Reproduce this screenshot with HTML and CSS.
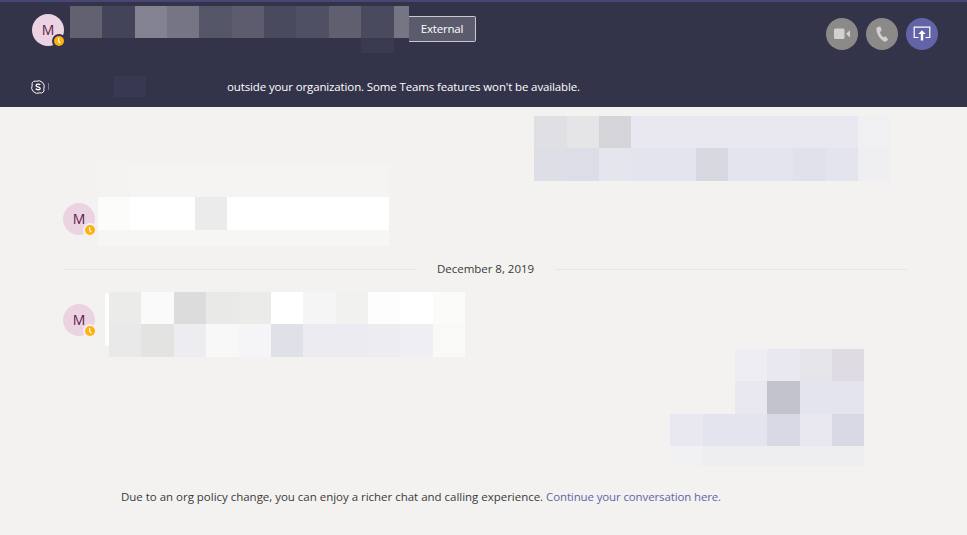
FILE: index.html
```html
<!DOCTYPE html>
<html lang="en">
<head>
<meta charset="utf-8">
<title>Chat</title>
<link rel="stylesheet" href="styles.css">
</head>
<body>
<svg class="defs" width="0" height="0" aria-hidden="true"><defs>
<g id="clock"><circle cx="6" cy="6" r="5" fill="#ffb10f"/><path d="M5.600 3v3.200l1.700 2" fill="none" stroke="#fff" stroke-width="1.200"/></g>
</defs></svg>
<header class="header">
  <div class="top">
    <div class="avatar">M<svg class="status status-dark" viewBox="0 0 12 12"><use href="#clock"/></svg></div>
    <div class="mosaic name">
      <i class="n1"></i><i class="n2"></i><i class="n3"></i><i class="n4"></i><i class="n5"></i><i class="n6"></i><i class="n7"></i><i class="n8"></i><i class="n9"></i><i class="n7"></i><i class="n4"></i>
      <i class="blank span9"></i><i class="n0"></i>
    </div>
    <div class="external">External</div>
    <div class="actions">
      <button class="round grey" aria-label="Video call"><svg viewBox="0 0 16 16" width="16" height="16"><rect x="0" y="2.500" width="10.500" height="10.500" rx="1.500" fill="#d2d0ce"/><path d="M12 7.700 16 4.200v7.400z" fill="#d2d0ce"/></svg></button>
      <button class="round grey" aria-label="Audio call"><svg viewBox="0 0 16 16" width="16" height="16"><path d="M3.400 1.200 5.600.6c.5-.1.900.1 1.100.6l.9 2.600c.1.400 0 .8-.3 1L6 5.900c.3 2 1.700 4.100 3.600 5.300l1.500-.6c.4-.1.800 0 1.100.3l1.600 2.100c.3.400.2.900-.2 1.200l-1.500 1.100c-.6.400-1.300.5-2 .1C5.800 13 2.600 8.200 2.400 2.700c0-.7.400-1.300 1-1.500z" fill="#d2d0ce"/></svg></button>
      <button class="round purple" aria-label="Share screen"><svg viewBox="0 0 18 18" width="18" height="18"><path d="M5.500 12.500H1.200V2.200h15.600v10.300h-4.300" fill="none" stroke="#fff" stroke-width="1.200"/><path d="M9 5.200l3.700 3.900h-2.500v6.500H7.800V9.100H5.300z" fill="#fff"/></svg></button>
    </div>
  </div>
  <div class="banner">
    <svg class="skype" viewBox="0 0 14 14" width="14" height="14"><path d="M4 1.100a3 3 0 0 0-2.800 4 5.800 5.800 0 0 0 7.700 7.700 3 3 0 0 0 3.900-3.900A5.800 5.800 0 0 0 5.100 1.300 3 3 0 0 0 4 1.100z" fill="none" stroke="#fff" stroke-width="1"/><path d="M9.200 5c-.5-.9-3.800-1.400-4.200.3-.4 2 4.400 1.200 4.200 3.300-.2 1.600-3.700 1.400-4.500.1" fill="none" stroke="#fff" stroke-width="1.300"/></svg>
    <span class="bar"></span>
    <span class="faint"></span>
    <span class="notice">outside your organization. Some Teams features won't be available.</span>
  </div>
</header>
<main class="chat">
  <div class="mosaic m1">
    <i class="a1"></i><i class="a2"></i><i class="a3"></i><i class="a4"></i><i class="a4"></i><i class="a4"></i><i class="a4"></i><i class="a4"></i><i class="a4"></i><i class="a4"></i><i class="a5"></i>
    <i class="b1"></i><i class="b2"></i><i class="b7"></i><i class="b3"></i><i class="b3"></i><i class="b4"></i><i class="b3"></i><i class="b3"></i><i class="b5"></i><i class="b3"></i><i class="b6"></i>
  </div>
  <div class="message m2-row">
    <div class="avatar avatar-low">M<svg class="status" viewBox="0 0 12 12"><use href="#clock"/></svg></div>
    <div class="mosaic m2">
      <i class="c1"></i><i class="c2"></i><i class="c2"></i><i class="c2"></i><i class="c2"></i>
      <i class="c3"></i><i class="c4"></i><i class="c5"></i><i class="c4"></i><i class="c4"></i>
      <i class="c6"></i><i class="c6"></i><i class="c6"></i><i class="c6"></i><i class="c6"></i>
    </div>
  </div>
  <div class="divider"><span class="date">December 8, 2019</span></div>
  <div class="message m3-row">
    <div class="avatar">M<svg class="status" viewBox="0 0 12 12"><use href="#clock"/></svg></div>
    <div class="bubble-edge"></div>
    <div class="mosaic m3">
      <i class="d1"></i><i class="d2"></i><i class="d3"></i><i class="d4"></i><i class="d1"></i><i class="c4"></i><i class="d5"></i><i class="d6"></i><i class="d7"></i><i class="c4"></i><i class="d8"></i>
      <i class="e1"></i><i class="e2"></i><i class="e3"></i><i class="e4"></i><i class="e5"></i><i class="e6"></i><i class="e7"></i><i class="e7"></i><i class="e3"></i><i class="e8"></i><i class="e9"></i>
    </div>
  </div>
  <div class="mosaic m4">
    <i class="blank"></i><i class="blank"></i><i class="f1"></i><i class="a4"></i><i class="f2"></i><i class="f3"></i>
    <i class="blank"></i><i class="blank"></i><i class="a4"></i><i class="f4"></i><i class="b3"></i><i class="b3"></i>
    <i class="a4"></i><i class="b3"></i><i class="b3"></i><i class="f5"></i><i class="a4"></i><i class="f5"></i>
    <i class="g1"></i><i class="g2"></i><i class="g2"></i><i class="g2"></i><i class="g2"></i><i class="g2"></i>
  </div>
  <p class="policy">Due to an org policy change, you can enjoy a richer chat and calling experience. <a href="#">Continue your conversation here.</a></p>
</main>
</body>
</html>
```
FILE: styles.css
```css
* { box-sizing: border-box; }
html, body { margin: 0; height: 100%; }
body {
  width: 967px;
  height: 535px;
  overflow: hidden;
  display: flex;
  flex-direction: column;
  font-family: "Open Sans", "Liberation Sans", sans-serif;
  font-size: 11.500px;
  background: #f3f2f1;
  color: #3b3a39;
}
.defs { position: absolute; }

.header {
  height: 107px;
  flex: none;
  background: #33344a;
  border-top: 2px solid #464775;
  color: #fff;
}
.top { display: flex; align-items: flex-start; padding-left: 32px; height: 62px; }
.avatar {
  position: relative;
  flex: none;
  width: 32px;
  height: 32px;
  border-radius: 50%;
  background: #ecd3e2;
  color: #5c2048;
  font-size: 14px;
  font-weight: 500;
  line-height: 32px;
  text-align: center;
}
.top > .avatar { margin-top: 12px; margin-right: 6px; }
.status {
  position: absolute;
  right: -2px;
  bottom: -2px;
  width: 14px;
  height: 14px;
  border-radius: 50%;
  background: #f3f2f1;
  padding: 1px;
}
.status-dark { background: #33344a; }

.mosaic { display: grid; flex: none; }
.mosaic i { display: block; }
.name {
  margin-top: 4px;
  grid-template-columns: 32px 33px 32px 32px 33px 32px 32px 33px 32px 33px 15px;
  grid-template-rows: 32px 15px;
}
.span9 { grid-column: span 9; }
.n0 { background: #393a50; }
.n1 { background: #62616f; }
.n2 { background: #43445a; }
.n3 { background: #838290; }
.n4 { background: #757583; }
.n5 { background: #555568; }
.n6 { background: #5c5c6e; }
.n7 { background: #4a4a5e; }
.n8 { background: #505064; }
.n9 { background: #605f70; }

.external {
  margin-top: 14px;
  width: 67px;
  height: 26px;
  background: #5b5b6e;
  border: 1px solid #c8c8d0;
  border-left: 0;
  border-radius: 0 2px 2px 0;
  font-weight: 500;
  letter-spacing: -0.2px;
  line-height: 24px;
  text-align: center;
}
.actions { display: flex; gap: 8px; margin: 16px 29px 0 auto; }
.round {
  width: 32px;
  height: 32px;
  padding: 0;
  border: 0;
  border-radius: 50%;
  display: flex;
  align-items: center;
  justify-content: center;
}
.grey { background: #8b8a89; }
.purple { background: #6264a7; }

.banner { display: flex; align-items: center; height: 21px; margin-top: 12px; padding-left: 31px; }
.skype { flex: none; }
.bar { width: 1px; height: 7px; margin-left: 3px; background: #77788a; }
.faint { width: 32px; height: 21px; margin-left: 65px; background: #383950; }
.notice {
  margin-left: 81px;
  white-space: nowrap;
  font-weight: 500;
  letter-spacing: -0.13px;
}

.chat { flex: 1; display: flex; flex-direction: column; min-height: 0; }
.m1 {
  align-self: flex-end;
  margin: 9px 77px 0 0;
  grid-template-columns: 33px 32px 32px 32px 33px 32px 32px 33px 33px 32px 32px;
  grid-template-rows: 32px 33px;
}
.a1 { background: #e0dfe3; }
.a2 { background: #e5e4e7; }
.a3 { background: #d5d4d8; }
.a4 { background: #e9e8f1; }
.a5 { background: #f0eff1; }
.b1 { background: #dedee7; }
.b2 { background: #dddde7; }
.b3 { background: #e4e4ef; }
.b4 { background: #d8d8e0; }
.b5 { background: #e1e1ec; }
.b6 { background: #efeef0; }
.b7 { background: #e5e5ed; }

.message { display: flex; padding-left: 63px; }
.m2-row { margin-top: -16px; align-items: flex-end; }
.avatar-low { margin-right: 3px; margin-bottom: 11px; }
.m2 {
  grid-template-columns: 32px 65px 32px 130px 32px;
  grid-template-rows: 32px 33px 16px;
}
.c1 { background: #f4f3f1; }
.c2 { background: #f5f4f2; }
.c3 { background: #fcfcfa; }
.c4 { background: #ffffff; }
.c5 { background: #ebebeb; }
.c6 { background: #f6f6f5; }

.divider {
  display: flex;
  align-items: center;
  gap: 21px;
  height: 20px;
  margin: 13px 60px 0 64px;
}
.divider::before, .divider::after { content: ""; flex: 1; height: 1px; background: #e6e5e3; }
.date { padding-bottom: 2px; letter-spacing: -0.02px; }

.m3-row { margin-top: 13px; }
.m3-row > .avatar { margin-top: 12px; margin-right: 10px; }
.bubble-edge { width: 8px; height: 53px; margin: 1px -4px 0 0; background: #fff; border-radius: 3px; }
.m3 {
  grid-template-columns: 32px 33px 32px 33px 32px 32px 33px 32px 32px 33px 32px;
  grid-template-rows: 32px 33px;
}
.d1 { background: #ebebe9; }
.d2 { background: #fafafa; }
.d3 { background: #dcdcdc; }
.d4 { background: #e9e9e7; }
.d5 { background: #f5f5f5; }
.d6 { background: #f1f1ef; }
.d7 { background: #fdfdfd; }
.d8 { background: #fbfbf9; }
.e1 { background: #e9e9e9; }
.e2 { background: #e3e3e1; }
.e3 { background: #edecf1; }
.e4 { background: #f8f8f8; }
.e5 { background: #f5f5f7; }
.e6 { background: #e0e0e9; }
.e7 { background: #ecebf2; }
.e8 { background: #efeef3; }
.e9 { background: #f9f9f7; }

.m4 {
  align-self: flex-end;
  margin: -8px 103px 0 0;
  grid-template-columns: 33px 32px 32px 33px 32px 32px;
  grid-template-rows: 32px 33px 32px 20px;
}
.f1 { background: #eeedf1; }
.f2 { background: #e5e5ea; }
.f3 { background: #dedce2; }
.f4 { background: #c3c3cd; }
.f5 { background: #d9d9e5; }
.g1 { background: #f1f0f2; }
.g2 { background: #eeedef; }

.policy { margin: 23px 0 0; padding-left: 121px; line-height: 16px; letter-spacing: -0.02px; }
.policy a { color: #6264a7; text-decoration: none; letter-spacing: -0.13px; }
```
